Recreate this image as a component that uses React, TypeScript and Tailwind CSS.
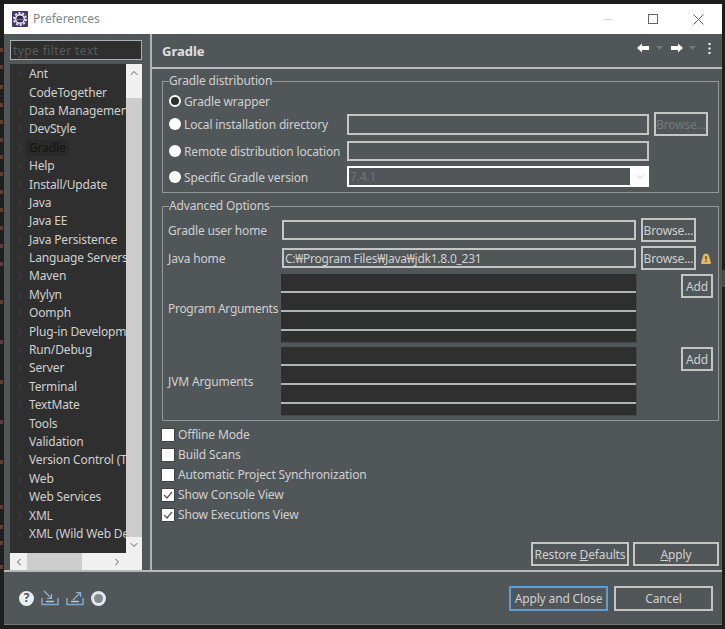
import { ChevronDown, ChevronLeft, ChevronRight, ChevronUp } from 'lucide-react';

const treeItems = [
  { label: 'Ant', arrow: true },
  { label: 'CodeTogether', arrow: false },
  { label: 'Data Management', arrow: true },
  { label: 'DevStyle', arrow: true },
  { label: 'Gradle', arrow: true, selected: true },
  { label: 'Help', arrow: true },
  { label: 'Install/Update', arrow: true },
  { label: 'Java', arrow: true },
  { label: 'Java EE', arrow: true },
  { label: 'Java Persistence', arrow: true },
  { label: 'Language Servers', arrow: true },
  { label: 'Maven', arrow: true },
  { label: 'Mylyn', arrow: true },
  { label: 'Oomph', arrow: true },
  { label: 'Plug-in Development', arrow: true },
  { label: 'Run/Debug', arrow: true },
  { label: 'Server', arrow: true },
  { label: 'Terminal', arrow: true },
  { label: 'TextMate', arrow: true },
  { label: 'Tools', arrow: false },
  { label: 'Validation', arrow: false },
  { label: 'Version Control (Team)', arrow: true },
  { label: 'Web', arrow: true },
  { label: 'Web Services', arrow: true },
  { label: 'XML', arrow: true },
  { label: 'XML (Wild Web Developer)', arrow: true },
];

// bits of the code editor showing behind the dialog, on its left edge
const behindMarks = [48, 65, 85, 103, 120, 138, 155, 172, 190, 208, 226, 244, 262, 300, 340, 380, 420, 460, 505, 525, 541, 565];

const Btn = ({ children, className }: { children: React.ReactNode; className: string }) => (
  <div className={`flex items-center justify-center border-2 border-[#c4c6c6] pt-[2px] ${className}`}>
    {children}
  </div>
);

const Radio = ({ on, label }: { on?: boolean; label: string }) => (
  <div className="flex items-center gap-[3px]">
    <span
      className={`flex h-3 w-3 shrink-0 rounded-full ${on ? 'border-2 border-white bg-[#2f2f2f]' : 'bg-white'}`}
    />
    <span className="whitespace-nowrap pt-[2px]">{label}</span>
  </div>
);

const Check = ({ on, label }: { on?: boolean; label: string }) => (
  <div className="flex h-5 items-center gap-[4px]">
    <span className="flex h-3 w-3 shrink-0 items-center justify-center bg-white outline outline-1 outline-[#3f4345]">
      {on && (
        <svg width="10" height="10" viewBox="0 0 10 10" fill="none" stroke="#555" strokeWidth="1.2">
          <path d="M1 5l3 3 5-6" />
        </svg>
      )}
    </span>
    <span>{label}</span>
  </div>
);

const ArgsBox = () => (
  <div className="flex h-[69px] w-[356px] flex-col border-b border-r border-[#45494b] bg-[#2f2f2f]">
    <div className="h-[19px] border-b-2 border-[#b0b3b3]" />
    <div className="h-[19px] border-b-2 border-[#b0b3b3]" />
    <div className="h-[19px] border-b-2 border-[#b0b3b3]" />
  </div>
);

const BoxIcon = ({ out }: { out?: boolean }) => (
  <svg width="18" height="16" viewBox="0 0 18 16" fill="none" strokeWidth="1.2">
    <path d="M1 8v6.500h16V8" stroke="#7fa8d0" strokeWidth="1.500" />
    <path d="M5 11.500h8" stroke="#a9c6e2" strokeWidth="1.500" />
    {out ? (
      <path d="M7 10l7-7M10 2.500h4.500V7" stroke="#8fb4d8" />
    ) : (
      <path d="M3 1l7 7M10.500 4v4.500H6" stroke="#8fb4d8" />
    )}
  </svg>
);

export default function App() {
  return (
    <div
      className="relative h-[629px] w-[725px] overflow-hidden bg-[#1e1e1e] pb-1 pl-1 pr-[3px] pt-1 text-[12px] leading-4 tracking-[-0.15px] text-[#cfd1d1]"
      style={{ fontFamily: '"Noto Sans", "Open Sans", sans-serif' }}
    >
      {behindMarks.map((y) => (
        <span key={y} className="absolute left-0 h-[4px] w-[3px] bg-[#5e3d34]" style={{ top: y }} />
      ))}
      <span className="absolute right-0 top-[270px] h-[17px] w-[3px] bg-[#4a4a4a]" />

      <div className="flex h-full flex-col border-b border-[#75797a] bg-[#515658]">
        {/* Title bar */}
        <div className="flex h-[30px] shrink-0 items-center bg-white pl-2 tracking-normal text-[#80878a]">
          <svg width="16" height="16" viewBox="0 0 16 16" className="shrink-0">
            <rect width="16" height="16" rx="1" fill="#43356e" />
            <circle cx="8" cy="8" r="6" fill="none" stroke="#e8e8ee" strokeWidth="2" strokeDasharray="2.200 1.500" />
            <circle cx="8" cy="8" r="4.300" fill="#2c2444" stroke="#f4f4f8" strokeWidth="1.400" />
            <path d="M5 8.500h6" stroke="#6a5aa8" strokeWidth="2" />
          </svg>
          <span className="ml-[5px]">Preferences</span>
          <div className="ml-auto flex items-center">
            <span className="h-px w-[10px] bg-[#dddddd]" />
            <span className="ml-[35px] h-[10px] w-[10px] border border-[#666666]" />
            <svg width="11" height="11" viewBox="0 0 11 11" stroke="#666666" className="ml-[35px] mr-[18px]">
              <path d="M.5.5l10 10M10.500.5l-10 10" />
            </svg>
          </div>
        </div>

        <div className="flex min-h-0 flex-1">
          {/* Sidebar */}
          <div className="flex w-[146px] shrink-0 flex-col pl-1.5 pt-1.5">
            <div className="h-5 w-[132px] border border-[#aeb0b0] bg-[#2f2f2f] px-[2px] leading-[19px] tracking-[0.4px] text-[#565b5d]">
              type filter text
            </div>
            <div className="mt-1 flex h-[506px] w-[132px] flex-col">
              <div className="flex min-h-0 flex-1">
                <div className="w-[116px] overflow-hidden bg-[#2f2f2f]">
                  <ul className="pt-px">
                    {treeItems.map((item) => (
                      <li key={item.label} className="relative flex h-[18.4px] items-center whitespace-nowrap pl-[19px]">
                        {item.arrow && (
                          <ChevronRight size={12} strokeWidth={1.500} className="absolute left-[4px] text-[#464a4c]" />
                        )}
                        <span className={item.selected ? '-ml-[3px] bg-[#2a2a2a] px-[3px] text-[#141414]' : ''}>
                          {item.label}
                        </span>
                      </li>
                    ))}
                  </ul>
                </div>
                <div className="flex w-4 flex-col bg-[#f0f0f0] text-[#606060]">
                  <div className="flex h-[34px] justify-center pt-[3px]">
                    <ChevronUp size={12} strokeWidth={2} />
                  </div>
                  <div className="flex-1 bg-[#cdcdcd]" />
                  <div className="flex h-[16px] items-center justify-center">
                    <ChevronDown size={12} strokeWidth={2} />
                  </div>
                </div>
              </div>
              <div className="flex h-[17px] items-center bg-[#f0f0f0] text-[#606060]">
                <div className="flex w-[17px] justify-center">
                  <ChevronLeft size={12} strokeWidth={2} />
                </div>
                <div className="h-full w-[55px] bg-[#cdcdcd]" />
                <div className="pl-[29px]">
                  <ChevronRight size={12} strokeWidth={2} />
                </div>
              </div>
            </div>
          </div>

          {/* Right panel */}
          <div className="flex min-w-0 flex-1 flex-col border-l-2 border-[#aeb1b2]">
            <div className="flex h-[35px] shrink-0 items-center justify-between border-b-2 border-[#b6b9ba] pl-[10px] pr-[11px]">
              <span className="pt-px text-[13px] font-bold tracking-normal text-[#e0e0e0]">Gradle</span>
              <div className="-mt-[5px] flex items-center">
                <svg width="12" height="10" viewBox="0 0 12 10" fill="#fff"><path d="M0 5l5-4.500V3h7v4H5v2.500z" /></svg>
                <svg width="7" height="4" viewBox="0 0 7 4" fill="#777b7d" className="ml-[7px]"><path d="M0 0h7L3.500 4z" /></svg>
                <svg width="12" height="10" viewBox="0 0 12 10" fill="#fff" className="ml-[8px]"><path d="M12 5L7 .5V3H0v4h7v2.500z" /></svg>
                <svg width="7" height="4" viewBox="0 0 7 4" fill="#777b7d" className="ml-[6px]"><path d="M0 0h7L3.500 4z" /></svg>
                <svg width="3" height="11" viewBox="0 0 3 11" fill="#fff" className="ml-[12px]">
                  <rect x="0.500" width="2" height="2" /><rect x="0.500" y="4.500" width="2" height="2" /><rect x="0.500" y="9" width="2" height="2" />
                </svg>
              </div>
            </div>

            <div className="flex min-h-0 flex-1 flex-col pl-[10px] pr-[3px] pt-[4px]">
              <fieldset className="border border-[#94989a] pb-[5px] pl-[6px]">
                <legend className="h-4">Gradle distribution</legend>
                <div className="mt-[2px] flex h-5 items-center">
                  <Radio on label="Gradle wrapper" />
                </div>
                <div className="mt-px flex h-6 items-center">
                  <div className="w-[178px]"><Radio label="Local installation directory" /></div>
                  <div className="h-[21px] w-[302px] border-2 border-[#c4c6c6]" />
                  <Btn className="ml-[5px] h-6 w-[54px]"><span className="text-[#74797b]">Browse...</span></Btn>
                </div>
                <div className="mt-[5px] flex h-5 items-center">
                  <div className="w-[178px]"><Radio label="Remote distribution location" /></div>
                  <div className="h-5 w-[302px] border-2 border-[#c4c6c6]" />
                </div>
                <div className="mt-[5px] flex h-[21px] items-center">
                  <div className="w-[178px]"><Radio label="Specific Gradle version" /></div>
                  <div className="flex h-[21px] w-[302px] items-center border-2 border-r-0 border-white pl-[1px] text-[#6f7476]">
                    7.4.1
                    <div className="ml-auto flex h-[21px] w-[19px] items-center justify-center bg-white text-[#a8a8a8]">
                      <ChevronDown size={12} strokeWidth={1.200} />
                    </div>
                  </div>
                </div>
              </fieldset>

              <fieldset className="mt-[5px] border border-[#94989a] pb-1 pl-[5px]">
                <legend className="ml-px h-4">Advanced Options</legend>
                <div className="mt-1 flex h-6 items-center">
                  <div className="w-[114px] pt-px">Gradle user home</div>
                  <div className="h-5 w-[354px] border-2 border-[#c4c6c6]" />
                  <Btn className="ml-[5px] h-6 w-[55px]">Browse...</Btn>
                </div>
                <div className="mt-1 flex h-6 items-center">
                  <div className="w-[114px] pt-px">Java home</div>
                  <div className="h-5 w-[354px] border-2 border-[#c4c6c6] pl-[1px] leading-[17px] tracking-[-0.25px]">C:₩Program Files₩Java₩jdk1.8.0_231</div>
                  <Btn className="ml-[5px] h-6 w-[55px]">Browse...</Btn>
                  <svg width="10" height="11" viewBox="0 0 10 11" className="ml-[5px]">
                    <path d="M5 0.500c2 0 3 1.500 3.300 3.500L10 9.500c0 1-.5 1.500-1.500 1.500h-7C.5 11 0 10.500 0 9.500L1.700 4C2 2 3 .5 5 .5z" fill="#e7b75f" />
                    <rect x="4.300" y="3" width="1.400" height="3.500" fill="#5a4a2a" />
                    <rect x="4.300" y="7.500" width="1.400" height="1.500" fill="#5a4a2a" />
                  </svg>
                </div>
                <div className="mt-1 flex items-start">
                  <div className="flex h-[69px] w-[113px] items-center whitespace-nowrap pt-px tracking-[-0.3px]">Program Arguments</div>
                  <ArgsBox />
                  <Btn className="ml-[44px] h-6 w-[32px]">Add</Btn>
                </div>
                <div className="mt-1 flex items-start">
                  <div className="flex h-[69px] w-[113px] items-center whitespace-nowrap">JVM Arguments</div>
                  <ArgsBox />
                  <Btn className="ml-[44px] h-6 w-[32px]">Add</Btn>
                </div>
              </fieldset>

              <div className="mt-[4px] flex flex-col">
                <Check label="Offline Mode" />
                <Check label="Build Scans" />
                <Check label="Automatic Project Synchronization" />
                <Check on label="Show Console View" />
                <Check on label="Show Executions View" />
              </div>

              <div className="mt-auto flex justify-end gap-1 pb-[4px]">
                <Btn className="h-6 w-[98px]">
                  <span>Restore <u>D</u>efaults</span>
                </Btn>
                <Btn className="h-6 w-[86px]">
                  <span><u>A</u>pply</span>
                </Btn>
              </div>
            </div>
          </div>
        </div>

        {/* Footer */}
        <div className="flex h-[54px] shrink-0 items-center border-t-2 border-[#b6b9ba] pl-[15px] pr-[9px]">
          <div className="flex items-center gap-[7px]">
            <span className="flex h-[15px] w-[15px] items-center justify-center rounded-full bg-[#e8eef2] text-[12px] font-bold leading-none text-[#51565a]">?</span>
            <BoxIcon />
            <BoxIcon out />
            <span className="flex h-[15px] w-[15px] items-center justify-center rounded-full bg-[#dfe9f2]">
              <span className="h-[9px] w-[9px] rounded-full bg-[#858a8d]" />
            </span>
          </div>
          <div className="ml-auto flex gap-[6px]">
            <Btn className="h-[25px] w-[99px] !border-[#5a9fd6]">Apply and Close</Btn>
            <Btn className="h-[25px] w-[99px]">Cancel</Btn>
          </div>
        </div>
      </div>
    </div>
  );
}
